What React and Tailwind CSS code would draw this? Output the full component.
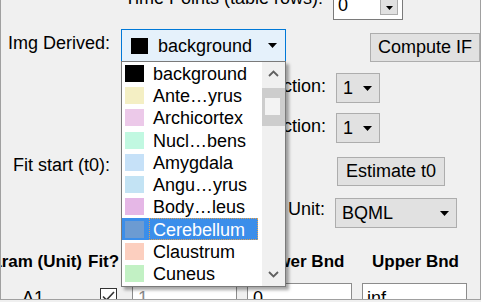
import React from 'react';

const regions = [
  { name: 'background', color: '#000000' },
  { name: 'Ante…yrus', color: '#f4efc4' },
  { name: 'Archicortex', color: '#ecc9e9' },
  { name: 'Nucl…bens', color: '#c1f8e1' },
  { name: 'Amygdala', color: '#c6e1f8' },
  { name: 'Angu…yrus', color: '#c3e3f4' },
  { name: 'Body…leus', color: '#e5b7e6' },
  { name: 'Cerebellum', color: '#6c9bd2', selected: true },
  { name: 'Claustrum', color: '#fccfbf' },
  { name: 'Cuneus', color: '#c2f1c4' },
];

const Caret = ({ className = '' }) => (
  <svg width="9" height="5" viewBox="0 0 9 5" className={`shrink-0 ${className}`}>
    <path d="M0 0h9L4.5 5z" fill="#000" />
  </svg>
);

const SmallSelect = ({ value, className = '', w = 'w-[44px]' }) => (
  <div className={`flex h-[30px] shrink-0 items-center border border-[#adadad] bg-[#e1e1e1] ${w} ${className}`}>
    <span className="pl-[6px] leading-[21px]">{value}</span>
    <Caret className="ml-auto mr-[7px]" />
  </div>
);

const RegionList = () => (
  <div className="absolute left-[-1px] top-[31px] z-10 flex h-[226px] w-[165px] border border-[#7a7a7a] bg-white shadow-[3px_3px_3px_rgba(0,0,0,0.35)]">
    <div className="flex w-[136px] flex-col">
      {regions.map((r) => (
        <div
          key={r.name}
          className={`flex h-[22.3px] shrink-0 items-center ${r.selected ? 'bg-[#3b8eea] text-white' : ''}`}
        >
          <span className="ml-[3px] h-[17px] w-[19px] shrink-0" style={{ backgroundColor: r.color }} />
          <span
            className={`ml-[5px] flex h-full flex-1 items-center border pl-[3px] whitespace-nowrap ${
              r.selected ? 'border-dotted border-[#e0a050]' : 'border-transparent'
            }`}
          >
            <span className="mt-[2px] leading-[21px]">{r.name}</span>
          </span>
        </div>
      ))}
    </div>
    <div className="ml-[4px] flex w-[23px] flex-col bg-[#f0f0f0]">
      <div className="flex h-[23px] items-center justify-center">
        <svg width="11" height="7" viewBox="0 0 11 7">
          <path d="M1 6L5.5 1.5L10 6" fill="none" stroke="#606060" strokeWidth="1.8" />
        </svg>
      </div>
      <div className="mt-[3px] h-[38px] bg-[#cdcdcd] pl-[3px] pt-[10px]">
        <div className="h-[17px] w-[15px] bg-[#f3f3f3]" />
      </div>
      <div className="mt-auto flex h-[24px] items-center justify-center">
        <svg width="11" height="7" viewBox="0 0 11 7">
          <path d="M1 1L5.5 5.5L10 1" fill="none" stroke="#606060" strokeWidth="1.8" />
        </svg>
      </div>
    </div>
  </div>
);

export default function App() {
  return (
    <div className="h-[302px] w-[481px] overflow-hidden bg-[#f0f0f0] font-['Liberation_Sans',Arial,sans-serif] text-[18px] text-black">
      <div className="h-[300px] overflow-hidden border-x border-b border-[#a0a0a0]">
        {/* time points */}
        <div className="flex h-[20px] items-end">
          <div className="mb-[11px] w-[322px] shrink-0 whitespace-nowrap text-right leading-[21px]">
            Time Points (table rows):
          </div>
          <div className="ml-[10px] flex h-[30px] w-[70px] shrink-0 items-start border border-[#7a7a7a] bg-white">
            <span className="pl-[4px] pt-[4px] leading-[21px]">0</span>
            <div className="ml-auto mr-[4px] flex h-[24px] w-[18px] items-end justify-center border border-[#adadad] bg-[#e1e1e1] pb-[4px]">
              <svg width="7" height="4" viewBox="0 0 7 4">
                <path d="M0 0h7L3.5 4z" fill="#000" />
              </svg>
            </div>
          </div>
        </div>

        {/* img derived */}
        <div className="mt-[9px] flex h-[33px] items-start">
          <div className="mt-[4px] w-[109px] shrink-0 text-right leading-[21px]">Img Derived:</div>
          <div className="relative ml-[11px] flex h-[33px] w-[165px] shrink-0 items-center border border-[#0078d7] bg-[#e5f1fb]">
            <span className="ml-[9px] h-[16px] w-[17px] shrink-0 bg-black" />
            <span className="ml-[10px] pt-[1px] leading-[21px]">background</span>
            <Caret className="ml-auto mr-[8px]" />
            <RegionList />
          </div>
          <button className="ml-auto mt-[4px] h-[29px] w-[110px] shrink-0 border border-[#adadad] bg-[#e1e1e1] leading-[21px]">
            Compute IF
          </button>
        </div>

        {/* functions */}
        <div className="mt-[11px] flex h-[30px] items-start">
          <div className="mt-[3px] w-[325px] shrink-0 text-right leading-[21px]">Input Function:</div>
          <SmallSelect value="1" className="ml-[10px]" />
        </div>
        <div className="mt-[10px] flex h-[30px] items-start">
          <div className="mt-[3px] w-[325px] shrink-0 text-right leading-[21px]">Error Function:</div>
          <SmallSelect value="1" className="ml-[10px]" />
        </div>

        {/* fit start */}
        <div className="mt-[14px] flex h-[29px] items-start">
          <div className="-mt-[2px] w-[109px] shrink-0 text-right leading-[21px]">Fit start (t0):</div>
          <button className="ml-[227px] h-[29px] w-[108px] shrink-0 border border-[#adadad] bg-[#e1e1e1] leading-[21px]">
            Estimate t0
          </button>
        </div>

        {/* unit */}
        <div className="mt-[12px] flex h-[30px] items-start">
          <div className="mt-[1px] w-[324px] shrink-0 text-right leading-[21px]">Image Unit:</div>
          <SmallSelect value="BQML" className="ml-[10px]" w="w-[122px]" />
        </div>

        {/* table header */}
        <div className="mt-[23px] flex h-[21px] text-[17px] font-bold leading-[21px]">
          <div className="flex w-[81px] shrink-0 justify-end">
            <span className="shrink-0 whitespace-nowrap">Param (Unit)</span>
          </div>
          <div className="ml-[6px] w-[45px] shrink-0">Fit?</div>
          <div className="w-[105px] shrink-0" />
          <div className="ml-[10px] w-[105px] shrink-0 text-center">Lower Bnd</div>
          <div className="ml-[10px] w-[105px] shrink-0 text-center">Upper Bnd</div>
        </div>

        {/* table row */}
        <div className="mt-[11px] flex h-[26px] items-start">
          <div className="w-[81px] shrink-0 pl-[21px] pt-[5px] leading-[21px]">A1</div>
          <div className="ml-[18px] mt-[5px] flex h-[17px] w-[17px] shrink-0 items-center justify-center border border-[#333] bg-white">
            <svg width="13" height="11" viewBox="0 0 13 11">
              <path d="M1 5.5L4.5 9L12 1" fill="none" stroke="#333" strokeWidth="1.6" />
            </svg>
          </div>
          <div className="ml-[15px] h-[26px] w-[105px] shrink-0 border border-[#8c8c8c] bg-white pl-[5px] pt-[4px] leading-[21px] text-[#8a8a8a]">
            1
          </div>
          <div className="ml-[10px] h-[26px] w-[105px] shrink-0 border border-[#8c8c8c] bg-white pl-[5px] pt-[4px] leading-[21px]">
            0
          </div>
          <div className="ml-[10px] h-[26px] w-[105px] shrink-0 border border-[#8c8c8c] bg-white pl-[4px] pt-[4px] leading-[21px]">
            inf
          </div>
        </div>
      </div>
    </div>
  );
}
